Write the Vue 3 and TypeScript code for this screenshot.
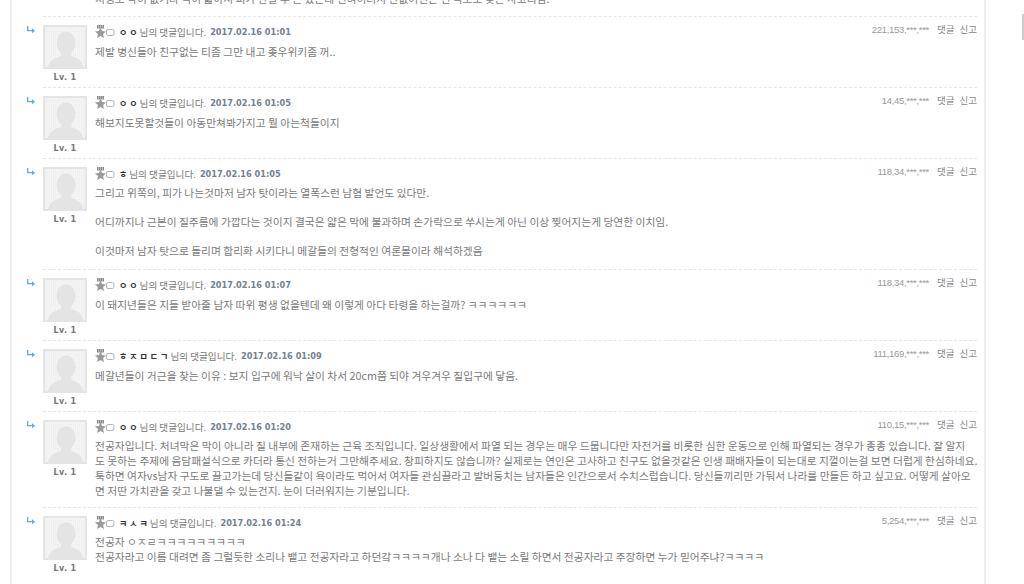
<template>
  <div class="page">
    <div class="panel">
      <div class="clipped">
        <p>처녕도 막이 없거나 벽이 얇아서 피가 안날 수 는 있는데 전혀이러지 안없어인는 건 극도로 낮은 사고리임.</p>
      </div>
      <div v-for="(c, i) in comments" :key="i" class="row">
        <svg class="arrow" width="8" height="8" viewBox="0 0 8 8">
          <path d="M0.7 0v4.700h5" fill="none" stroke="#5aa9e6" stroke-width="1.300" />
          <path d="M5 2.200l3 2.500-3 2.500z" fill="#5aa9e6" />
        </svg>
        <div class="user">
          <svg class="avatar" width="44" height="44" viewBox="0 0 44 44">
            <defs>
              <pattern :id="'dots' + i" width="2" height="2" patternUnits="userSpaceOnUse">
                <rect width="2" height="2" fill="#f4f4f4" />
                <rect width="1" height="1" fill="#ececec" />
              </pattern>
            </defs>
            <rect width="44" height="44" :fill="'url(#dots' + i + ')'" />
            <rect x="1" y="1" width="42" height="42" fill="none" stroke="#e4e4e4" stroke-width="2" />
            <ellipse cx="23" cy="18" rx="9.500" ry="11.500" fill="#e4e4e4" />
            <path d="M5 42c1-6 6-9 13-11v-5h10v5c7 2 11 5 12 11z" fill="#e4e4e4" />
          </svg>
          <div class="lv">Lv. 1</div>
        </div>
        <div class="content">
          <div class="head">
            <svg class="badge" width="20" height="14" viewBox="0 0 20 14">
              <path d="M2 0h7v3.500h-7z" fill="#8c8c8c" />
              <path d="M3.500 0v3.500M5.500 0v3.500M7.500 0v3.500" stroke="#d0d0d0" stroke-width=".6" />
              <path d="M5.500 2.500l1.600 3.600 3.900.4-2.900 2.600.8 3.900-3.400-2-3.400 2 .8-3.900L0 6.500l3.900-.4z" fill="#9a9a9a" />
              <rect x="11.500" y="4.500" width="7.500" height="6" rx="1.500" fill="#fff" stroke="#b5b5b5" />
            </svg>
            <span class="name">{{ c.name }}</span><span class="said">님의 댓글입니다.</span>
            <span class="date">{{ c.date }}</span>
            <span class="meta">
              <span class="ip">{{ c.ip }}</span>
              <span class="link">댓글</span>
              <span class="link">신고</span>
            </span>
          </div>
          <div class="body" :class="{ spaced: c.lines.includes(''), single: c.lines.length === 1 }">
            <p v-for="(line, j) in c.lines" :key="j" :class="{ blank: !line }">{{ line }}</p>
          </div>
        </div>
      </div>
    </div>
    <div class="thumb"></div>
  </div>
</template>

<script setup lang="ts">
interface Comment {
  name: string;
  date: string;
  ip: string;
  lines: string[];
}

const comments: Comment[] = [
  {
    name: "ㅇㅇ",
    date: "2017.02.16 01:01",
    ip: "221,153,***,***",
    lines: ["제발 병신들아 친구없는 티좀 그만 내고 좆우위키좀 꺼.."]
  },
  {
    name: "ㅇㅇ",
    date: "2017.02.16 01:05",
    ip: "14,45,***,***",
    lines: ["해보지도못할것들이 아동만쳐봐가지고 뭘 아는척들이지"]
  },
  {
    name: "ㅎ",
    date: "2017.02.16 01:05",
    ip: "118,34,***,***",
    lines: [
      "그리고 위쪽의, 피가 나는것마저 남자 탓이라는 열폭스런 남혐 발언도 있다만.",
      "",
      "어디까지나 근본이 질주름에 가깝다는 것이지 결국은 얇은 막에 불과하며 손가락으로 쑤시는게 아닌 이상 찢어지는게 당연한 이치임.",
      "",
      "이것마저 남자 탓으로 돌리며 합리화 시키다니 메갈들의 전형적인 여론몰이라 해석하겠음"
    ]
  },
  {
    name: "ㅇㅇ",
    date: "2017.02.16 01:07",
    ip: "118,34,***,***",
    lines: ["이 돼지년들은 지들 받아줄 남자 따위 평생 없을텐데 왜 이렇게 아다 타령을 하는걸까? ㅋㅋㅋㅋㅋㅋ"]
  },
  {
    name: "ㅎㅈㅁㄷㄱ",
    date: "2017.02.16 01:09",
    ip: "111,169,***,***",
    lines: ["메갈년들이 거근을 찾는 이유 : 보지 입구에 워낙 살이 차서 20cm쯤 되야 겨우겨우 질입구에 닿음."]
  },
  {
    name: "ㅇㅇ",
    date: "2017.02.16 01:20",
    ip: "110,15,***,***",
    lines: [
      "전공자입니다. 처녀막은 막이 아니라 질 내부에 존재하는 근육 조직입니다. 일상생활에서 파열 되는 경우는 매우 드뭅니다만 자전거를 비롯한 심한 운동으로 인해 파열되는 경우가 종종 있습니다. 잘 알지",
      "도 못하는 주제에 음담패설식으로 카더라 통신 전하는거 그만해주세요. 창피하지도 않습니까? 실제로는 연인은 고사하고 친구도 없을것같은 인생 패배자들이 되는대로 지껄이는걸 보면 더럽게 한심하네요.",
      "툭하면 여자vs남자 구도로 끌고가는데 당신들같이 욕이라도 먹어서 여자들 관심끌라고 발버둥치는 남자들은 인간으로서 수치스럽습니다. 당신들끼리만 가둬서 나라를 만들든 하고 싶고요. 어떻게 살아오",
      "면 저딴 가치관을 갖고 나불댈 수 있는건지. 눈이 더러워지는 기분입니다."
    ]
  },
  {
    name: "ㅋㅅㅋ",
    date: "2017.02.16 01:24",
    ip: "5,254,***,***",
    lines: [
      "전공자 ㅇㅈㄹㅋㅋㅋㅋㅋㅋㅋㅋㅋ",
      "전공자라고 이름 대려면 좀 그럴듯한 소리나 뱉고 전공자라고 하던갘ㅋㅋㅋㅋ개나 소나 다 뱉는 소릴 하면서 전공자라고 주장하면 누가 믿어주냐?ㅋㅋㅋㅋ"
    ]
  }
];
</script>

<style scoped>
.page {
  position: relative;
  height: 584px;
  overflow: hidden;
  background: #fff;
  font-family: "Noto Sans CJK KR", "Liberation Sans", sans-serif;
}
.panel {
  margin-left: 10px;
  padding: 0 7px 0 15px;
  box-sizing: border-box;
  width: 976px;
  height: 584px;
  border-left: 2px solid #eee;
  border-right: 2px solid #eee;
}
.clipped {
  height: 16px;
  overflow: hidden;
  padding-left: 68px;
}
.clipped p {
  margin: -9px 0 0;
  font-size: 10.750px;
  line-height: 15px;
  color: #7a7a7a;
  white-space: nowrap;
}
.row {
  display: flex;
  min-height: 71px;
  box-sizing: border-box;
  border-top: 1px dashed #e6e6e6;
  margin-left: 16px;
  position: relative;
}
.arrow {
  position: absolute;
  left: -16px;
  top: 9px;
}
.user {
  width: 44px;
  padding-top: 8px;
  flex-shrink: 0;
}
.avatar {
  display: block;
}
.lv {
  margin-top: 3px;
  text-align: center;
  font-family: "DejaVu Sans", sans-serif;
  font-size: 8px;
  font-weight: bold;
  letter-spacing: 0.4px;
  line-height: 12px;
  color: #777;
}
.content {
  flex: 1;
  padding: 7px 0 9px 8px;
  min-width: 0;
}
.head {
  display: flex;
  align-items: center;
  height: 16px;
  font-size: 9.600px;
  color: #777;
}
.badge {
  margin-right: 4px;
}
.name {
  font-weight: bold;
  color: #333;
  letter-spacing: 2px;
  font-size: 9px;
}
.date {
  margin-left: 4px;
  font-family: "DejaVu Sans", sans-serif;
  font-size: 8.200px;
  font-weight: bold;
  color: #75808f;
}
.meta {
  margin-left: auto;
  display: flex;
  align-items: center;
  gap: 5px;
  margin-top: -6px;
  font-size: 9.500px;
  color: #888;
}
.ip {
  font-family: "Liberation Sans", sans-serif;
  font-size: 9.500px;
  letter-spacing: -0.3px;
  margin-right: 3px;
  color: #999;
}
.body {
  margin-top: 3px;
  font-size: 10.750px;
  line-height: 15px;
  color: #7a7a7a;
}
.body.single {
  margin-top: 4px;
}
.body.spaced {
  padding-bottom: 2px;
}
.body p {
  margin: 0;
  white-space: nowrap;
}
.body p.blank {
  height: 14px;
}
.thumb {
  position: absolute;
  right: 0;
  top: 14px;
  width: 2px;
  height: 26px;
  background: #ccc;
}
</style>
